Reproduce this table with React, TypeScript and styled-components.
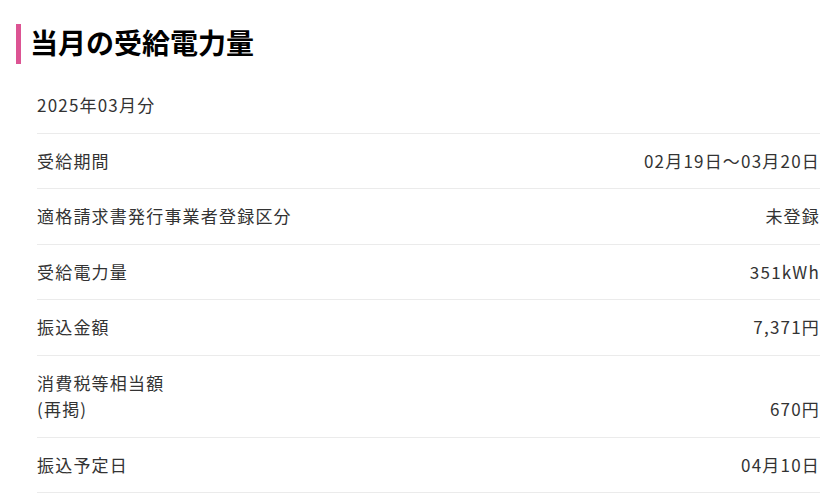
import React from 'react';
import styled, { createGlobalStyle } from 'styled-components';

const GlobalStyle = createGlobalStyle`
  body {
    margin: 0;
    background: #ffffff;
    font-family: "Noto Sans CJK JP", "Noto Sans", sans-serif;
    color: #333333;
  }
`;

const Page = styled.div`
  padding: 24px 16px 0 16px;
`;

const Heading = styled.h2`
  margin: 0 0 14px 0;
  padding: 0 0 4px 9px;
  border-left: 5px solid #dc5493;
  font-size: 28px;
  font-weight: 700;
  line-height: 36px;
  color: #000000;
`;

const List = styled.div`
  margin-left: 21px;
`;

const Row = styled.div`
  display: flex;
  justify-content: space-between;
  align-items: flex-end;
  padding: 14px 0;
  border-bottom: 1px solid #ebebeb;
  font-size: 17px;
  line-height: 26.5px;
  letter-spacing: 1.2px;
`;

const Label = styled.div`
  white-space: pre-line;
`;

const Value = styled.div`
  text-align: right;
`;

const rows = [
  { label: '2025年03月分', value: '' },
  { label: '受給期間', value: '02月19日～03月20日' },
  { label: '適格請求書発行事業者登録区分', value: '未登録' },
  { label: '受給電力量', value: '351kWh' },
  { label: '振込金額', value: '7,371円' },
  { label: '消費税等相当額\n(再掲)', value: '670円' },
  { label: '振込予定日', value: '04月10日' },
];

export default function App() {
  return (
    <Page>
      <GlobalStyle />
      <Heading>当月の受給電力量</Heading>
      <List>
        {rows.map(r => (
          <Row key={r.label}>
            <Label>{r.label}</Label>
            <Value>{r.value}</Value>
          </Row>
        ))}
      </List>
    </Page>
  );
}
